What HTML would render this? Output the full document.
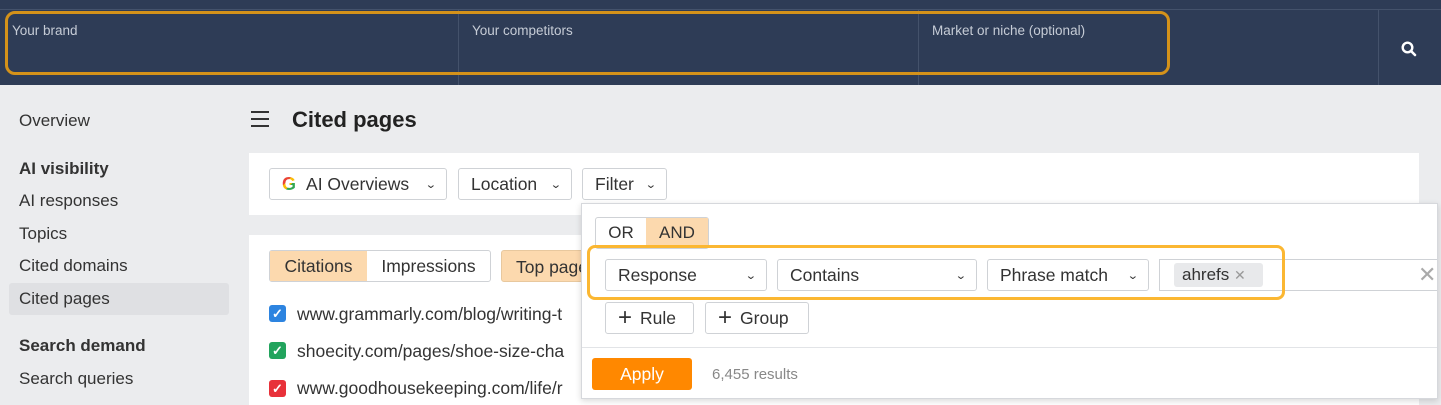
<!DOCTYPE html>
<html><head><meta charset="utf-8"><style>
*{box-sizing:border-box;margin:0;padding:0}
body{width:1441px;height:401px;overflow:hidden;background:#ebecee;font-family:"Liberation Sans",Arial,sans-serif;color:#333;position:relative}
.abs{position:absolute}
.hdr{left:0;top:0;width:1441px;height:85px;background:#2e3c56}
.hdr .line{left:0;top:9px;width:1441px;height:1px;background:#44526b}
.vd{top:10px;width:1px;height:75px;background:#44526b}
.lbl{color:#c6ccd6;font-size:13.5px;top:23px}
.ob{left:5px;top:11px;width:1165px;height:64px;border:3px solid #d4921a;border-radius:10px}
.side{font-size:17px;color:#333}
.btn{background:#fff;border:1px solid #cfd2d6;border-radius:3px;font-size:17.5px;color:#333;display:flex;align-items:center;padding:0 12px;height:32px}
.car{font-size:11px;margin-left:auto;padding-left:8px;transform:scaleX(1.3)}
.cb{width:17px;height:17px;border-radius:3px;color:#fff;font-size:13px;display:flex;align-items:center;justify-content:center;font-weight:bold}
.url{font-size:17.5px;color:#333}
</style></head><body>
<div class="abs hdr"><div class="abs line"></div></div>
<div class="abs vd" style="left:458px"></div>
<div class="abs vd" style="left:918px"></div>
<div class="abs vd" style="left:1378px"></div>
<div class="abs lbl" style="left:12px">Your brand</div>
<div class="abs lbl" style="left:472px">Your competitors</div>
<div class="abs lbl" style="left:932px">Market or niche (optional)</div>
<div class="abs ob"></div>
<svg class="abs" style="left:1400px;top:40px" width="18" height="18" viewBox="0 0 18 18"><circle cx="7.5" cy="7.5" r="4.8" fill="none" stroke="#fff" stroke-width="2.4"/><line x1="11" y1="11" x2="15" y2="15" stroke="#fff" stroke-width="2.6" stroke-linecap="round"/></svg>

<div class="abs side" style="left:19px;top:111px">Overview</div>
<div class="abs side" style="left:19px;top:159px;font-weight:bold">AI visibility</div>
<div class="abs side" style="left:19px;top:191px">AI responses</div>
<div class="abs side" style="left:19px;top:224px">Topics</div>
<div class="abs side" style="left:19px;top:256px">Cited domains</div>
<div class="abs" style="left:9px;top:283px;width:220px;height:32px;background:#dfe0e3;border-radius:3px"></div>
<div class="abs side" style="left:19px;top:289px">Cited pages</div>
<div class="abs side" style="left:19px;top:336px;font-weight:bold">Search demand</div>
<div class="abs side" style="left:19px;top:369px">Search queries</div>

<div class="abs" style="left:251px;top:111px;width:18px;height:16px;border-top:2.5px solid #333;border-bottom:2.5px solid #333"><div style="margin-top:4.5px;height:2.5px;background:#333"></div></div>
<div class="abs" style="left:292px;top:107px;font-size:22px;font-weight:bold;color:#222">Cited pages</div>

<div class="abs" style="left:249px;top:153px;width:1170px;height:62px;background:#fff"></div>
<div class="abs btn" style="left:269px;top:168px;width:178px"><span style="font-weight:bold;font-size:18px;background:linear-gradient(135deg,#ea4335 0 35%,#fbbc05 35% 55%,#34a853 55% 75%,#4285f4 75%);-webkit-background-clip:text;color:transparent;margin-right:10px">G</span>AI Overviews<span class="car">⌄</span></div>
<div class="abs btn" style="left:458px;top:168px;width:114px">Location<span class="car">⌄</span></div>
<div class="abs btn" style="left:582px;top:168px;width:85px">Filter<span class="car">⌄</span></div>

<div class="abs" style="left:249px;top:235px;width:1170px;height:170px;background:#fff"></div>
<div class="abs" style="left:269px;top:250px;width:222px;height:32px;border:1px solid #cfd2d6;border-radius:3px;display:flex;font-size:17.5px">
<div style="width:97px;background:#fcd9ae;display:flex;align-items:center;justify-content:center">Citations</div>
<div style="flex:1;display:flex;align-items:center;justify-content:center">Impressions</div></div>
<div class="abs" style="left:501px;top:250px;width:90px;height:32px;background:#fcd9ae;border:1px solid #e8c89e;border-radius:3px;font-size:17.5px;padding:6px 14px;overflow:hidden;white-space:nowrap">Top pages</div>
<div class="abs cb" style="left:269px;top:305px;background:#2d84e0">✓</div>
<div class="abs url" style="left:297px;top:304px">www.grammarly.com/blog/writing-t</div>
<div class="abs cb" style="left:269px;top:342px;background:#22a45d">✓</div>
<div class="abs url" style="left:297px;top:341px">shoecity.com/pages/shoe-size-cha</div>
<div class="abs cb" style="left:269px;top:380px;background:#e8313a">✓</div>
<div class="abs url" style="left:297px;top:378px">www.goodhousekeeping.com/life/r</div>

<div class="abs" style="left:581px;top:203px;width:857px;height:196px;background:#fff;border:1px solid #d6d8dc;box-shadow:0 2px 6px rgba(0,0,0,.15)"></div>
<div class="abs" style="left:595px;top:217px;width:114px;height:32px;border:1px solid #cfd2d6;border-radius:3px;display:flex;font-size:17px">
<div style="width:50px;display:flex;align-items:center;justify-content:center">OR</div>
<div style="flex:1;background:#fcd9ae;display:flex;align-items:center;justify-content:center">AND</div></div>
<div class="abs btn" style="left:605px;top:259px;width:162px">Response<span class="car">⌄</span></div>
<div class="abs btn" style="left:777px;top:259px;width:200px">Contains<span class="car">⌄</span></div>
<div class="abs btn" style="left:987px;top:259px;width:162px">Phrase match<span class="car">⌄</span></div>
<div class="abs" style="left:1159px;top:259px;width:278px;height:32px;border:1px solid #cfd2d6;border-right:none;background:#fff"></div>
<div class="abs" style="left:1174px;top:263px;width:89px;height:24px;background:#e8e9eb;border-radius:3px;font-size:17px;padding:2px 8px">ahrefs <span style="color:#999;font-size:14px">✕</span></div>
<div class="abs" style="left:1418px;top:262px;font-size:22px;color:#aaa">✕</div>
<div class="abs" style="left:587px;top:245px;width:698px;height:55px;border:3px solid #fbb732;border-radius:8px"></div>
<div class="abs btn" style="left:605px;top:302px;height:32px;width:89px"><span style="font-size:24px;margin-right:8px;font-weight:300">+</span>Rule</div>
<div class="abs btn" style="left:705px;top:302px;height:32px;width:104px"><span style="font-size:24px;margin-right:8px;font-weight:300">+</span>Group</div>
<div class="abs" style="left:582px;top:347px;width:855px;height:1px;background:#e2e4e7"></div>
<div class="abs" style="left:592px;top:358px;width:100px;height:32px;background:#ff8800;border-radius:3px;color:#fff;font-size:17.5px;display:flex;align-items:center;justify-content:center">Apply</div>
<div class="abs" style="left:712px;top:366px;font-size:15px;color:#888">6,455 results</div>
</body></html>
